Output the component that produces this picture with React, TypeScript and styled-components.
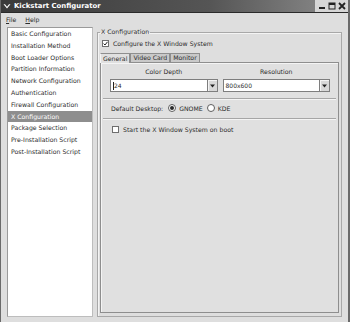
import styled, { createGlobalStyle } from "styled-components";

// === THEME ===
const colors = {
  bg: "#dedede",
  panel: "#e0e0e0",
  tabOff: "#c9c9c9",
  border: "#8c8c8c",
  borderLight: "#f6f6f6",
  text: "#2c2c2c",
  selected: "#8e8e8e",
  titleDark: "#3a3a3a",
  titleMid: "#555555",
  titleLight: "#8e8e8e",
};

const sections = [
  "Basic Configuration",
  "Installation Method",
  "Boot Loader Options",
  "Partition Information",
  "Network Configuration",
  "Authentication",
  "Firewall Configuration",
  "X Configuration",
  "Package Selection",
  "Pre-Installation Script",
  "Post-Installation Script",
];

const tabs = ["General", "Video Card", "Monitor"];

const GlobalStyle = createGlobalStyle`
  html, body {
    margin: 0;
    padding: 0;
    background: ${colors.bg};
  }
  body {
    font-family: "DejaVu Sans", "Noto Sans", sans-serif;
    font-size: 6.2px;
    color: ${colors.text};
  }
`;

// === WINDOW CHROME ===
const Window = styled.div`
  width: 350px;
  height: 322px;
  box-sizing: border-box;
  display: flex;
  flex-direction: column;
  background: ${colors.bg};
  border-left: 1px solid #6a6a6a;
  border-right: 2px solid #6a6a6a;
  overflow: hidden;
`;

const TitleBar = styled.div`
  height: 12px;
  display: flex;
  align-items: center;
  background: linear-gradient(90deg, ${colors.titleDark} 0%, ${colors.titleMid} 60%, ${colors.titleLight} 100%);
  border-bottom: 1px solid #2a2a2a;
`;

const MenuIcon = styled.div`
  width: 10px;
  height: 11px;
  display: flex;
  align-items: center;
  justify-content: center;
  margin-left: 1px;
`;

const Title = styled.span`
  flex: 1;
  margin-left: 2px;
  color: #ffffff;
  font-weight: bold;
  font-size: 6.9px;
`;

const Controls = styled.div`
  display: flex;
  height: 12px;
  padding: 0 1px 0 2px;
  background: #d6d6d6;
`;

const ControlButton = styled.div`
  width: 10px;
  height: 12px;
  display: flex;
  align-items: center;
  justify-content: center;
`;

const MenuBar = styled.div`
  height: 12px;
  display: flex;
  align-items: center;
  gap: 9px;
  padding-left: 5px;
`;

const MenuItem = styled.span`
  &::first-letter {
    text-decoration: underline;
  }
`;

// === BODY ===
const Body = styled.div`
  flex: 1;
  display: flex;
  gap: 4px;
  padding: 2px 6px 5px 6px;
  min-height: 0;
`;

const Sidebar = styled.div`
  width: 86px;
  box-sizing: border-box;
  background: #ffffff;
  border: 1px solid #9a9a9a;
  border-right-color: #bdbdbd;
  border-bottom-color: #bdbdbd;
`;

const SidebarItem = styled.div<{ $active?: boolean }>`
  height: 11.8px;
  line-height: 11.8px;
  padding-left: 3px;
  white-space: nowrap;
  background: ${(p) => (p.$active ? colors.selected : "transparent")};
  color: ${(p) => (p.$active ? "#ffffff" : colors.text)};
`;

const Frame = styled.fieldset`
  flex: 1;
  margin: 1px 0 0 0;
  padding: 0 2px 3px 2px;
  min-width: 0;
  border: 1px solid #a8a8a8;
  box-shadow: inset 1px 1px 0 #f4f4f4;
  display: flex;
  flex-direction: column;
`;

const FrameLabel = styled.legend`
  padding: 0 1px;
  margin-left: 0;
  line-height: 8px;
`;

const CheckRow = styled.label<{ $top?: number }>`
  display: flex;
  align-items: center;
  gap: 4px;
  height: 9px;
  margin: ${(p) => p.$top ?? 0}px 0 0 2px;
`;

const CheckBox = styled.span`
  width: 7px;
  height: 7px;
  box-sizing: border-box;
  background: #ffffff;
  border: 1px solid #6e6e6e;
  display: flex;
  align-items: center;
  justify-content: center;
`;

// === NOTEBOOK ===
const Notebook = styled.div`
  flex: 1;
  display: flex;
  flex-direction: column;
  margin-top: 4px;
`;

const TabStrip = styled.div`
  display: flex;
  height: 10px;
  align-items: flex-end;
`;

const Tab = styled.div<{ $active?: boolean }>`
  height: ${(p) => (p.$active ? 10 : 9)}px;
  box-sizing: border-box;
  padding: 0 2px;
  line-height: ${(p) => (p.$active ? 9 : 8)}px;
  background: ${(p) => (p.$active ? colors.panel : colors.tabOff)};
  border: 1px solid #8e8e8e;
  border-bottom: none;
  border-left-color: ${(p) => (p.$active ? "#f4f4f4" : "#8e8e8e")};
  margin-bottom: ${(p) => (p.$active ? -1 : 0)}px;
  position: relative;
  z-index: ${(p) => (p.$active ? 1 : 0)};
`;

const TabPanel = styled.div`
  flex: 1;
  background: ${colors.panel};
  border: 1px solid #8e8e8e;
  box-shadow: inset 1px 1px 0 #f4f4f4;
  padding: 5px 8px 0 9px;
  display: flex;
  flex-direction: column;
`;

const FieldGrid = styled.div`
  display: grid;
  grid-template-columns: 1fr 1fr;
  column-gap: 5px;
`;

const Field = styled.div`
  display: flex;
  flex-direction: column;
  align-items: stretch;
  gap: 3px;
`;

const FieldLabel = styled.div`
  text-align: center;
  line-height: 8px;
`;

const Combo = styled.div`
  height: 13px;
  display: flex;
  box-sizing: border-box;
  border: 1px solid #7e7e7e;
  background: #ffffff;
`;

const ComboText = styled.div`
  flex: 1;
  display: flex;
  align-items: center;
  padding-left: 2px;
  font-size: 6px;
`;

const Caret = styled.span`
  width: 1px;
  height: 8px;
  background: #222;
`;

const ComboButton = styled.div`
  width: 9px;
  display: flex;
  align-items: center;
  justify-content: center;
  background: #d8d8d8;
  border-left: 1px solid #7e7e7e;
  box-shadow: inset 1px 1px 0 #f4f4f4;
`;

const Separator = styled.div<{ $top: number }>`
  height: 0;
  border-top: 1px solid #a6a6a6;
  border-bottom: 1px solid #f4f4f4;
  margin: ${(p) => p.$top}px -6px 0 -7px;
`;

const RadioRow = styled.div`
  display: flex;
  align-items: center;
  height: 10px;
  margin-top: 3px;
  margin-left: 1px;
`;

const RadioLabel = styled.span`
  margin-right: 5px;
`;

const RadioOption = styled.span`
  display: flex;
  align-items: center;
  gap: 3px;
  margin-right: 4px;
`;

const Radio = styled.span<{ $checked?: boolean }>`
  width: 8px;
  height: 8px;
  box-sizing: border-box;
  border-radius: 50%;
  border: 1px solid #5e5e5e;
  background: #ffffff;
  display: flex;
  align-items: center;
  justify-content: center;

  &::after {
    content: "";
    width: 4px;
    height: 4px;
    border-radius: 50%;
    background: ${(p) => (p.$checked ? "#2a2a2a" : "transparent")};
  }
`;

const ChevronDown = ({ color = "#fff" }: { color?: string }) => (
  <svg width="8" height="7" viewBox="0 0 8 7">
    <path d="M0.5 1.2 L4 5.6 L7.5 1.2 L6 1.2 L4 3.8 L2 1.2 Z" fill={color} />
  </svg>
);

const Arrow = () => (
  <svg width="5" height="4" viewBox="0 0 5 4">
    <path d="M0 0.5 H5 L2.5 3.5 Z" fill="#222" />
  </svg>
);

const Check = () => (
  <svg width="5" height="5" viewBox="0 0 5 5">
    <path d="M0.6 2.6 L2 4 L4.5 0.8" fill="none" stroke="#222" strokeWidth="1" />
  </svg>
);

export default function App() {
  return (
    <>
      <GlobalStyle />
      <Window>
        <TitleBar>
          <MenuIcon>
            <ChevronDown />
          </MenuIcon>
          <Title>Kickstart Configurator</Title>
          <Controls>
            <ControlButton>
              <svg width="8" height="8" viewBox="0 0 8 8">
                <rect x="1" y="5" width="6" height="2" fill="#222" />
              </svg>
            </ControlButton>
            <ControlButton>
              <svg width="8" height="8" viewBox="0 0 8 8">
                <rect x="1" y="1" width="6" height="6" fill="none" stroke="#222" strokeWidth="1" />
                <rect x="1" y="1" width="6" height="2" fill="#222" />
              </svg>
            </ControlButton>
            <ControlButton>
              <svg width="8" height="8" viewBox="0 0 8 8">
                <path d="M1 1 L7 7 M7 1 L1 7" stroke="#222" strokeWidth="1.8" />
              </svg>
            </ControlButton>
          </Controls>
        </TitleBar>

        <MenuBar>
          <MenuItem>File</MenuItem>
          <MenuItem>Help</MenuItem>
        </MenuBar>

        <Body>
          <Sidebar>
            {sections.map((s) => (
              <SidebarItem key={s} $active={s === "X Configuration"}>
                {s}
              </SidebarItem>
            ))}
          </Sidebar>

          <Frame>
            <FrameLabel>X Configuration</FrameLabel>
            <CheckRow $top={3}>
              <CheckBox>
                <Check />
              </CheckBox>
              Configure the X Window System
            </CheckRow>

            <Notebook>
              <TabStrip>
                {tabs.map((t) => (
                  <Tab key={t} $active={t === "General"}>
                    {t}
                  </Tab>
                ))}
              </TabStrip>
              <TabPanel>
                <FieldGrid>
                  <Field>
                    <FieldLabel>Color Depth</FieldLabel>
                    <Combo>
                      <ComboText>
                        <Caret />
                        24
                      </ComboText>
                      <ComboButton>
                        <Arrow />
                      </ComboButton>
                    </Combo>
                  </Field>
                  <Field>
                    <FieldLabel>Resolution</FieldLabel>
                    <Combo>
                      <ComboText>800x600</ComboText>
                      <ComboButton>
                        <Arrow />
                      </ComboButton>
                    </Combo>
                  </Field>
                </FieldGrid>

                <Separator $top={6} />

                <RadioRow>
                  <RadioLabel>Default Desktop:</RadioLabel>
                  <RadioOption>
                    <Radio $checked />
                    GNOME
                  </RadioOption>
                  <RadioOption>
                    <Radio />
                    KDE
                  </RadioOption>
                </RadioRow>

                <Separator $top={5} />

                <CheckRow $top={5}>
                  <CheckBox />
                  Start the X Window System on boot
                </CheckRow>
              </TabPanel>
            </Notebook>
          </Frame>
        </Body>
      </Window>
    </>
  );
}
